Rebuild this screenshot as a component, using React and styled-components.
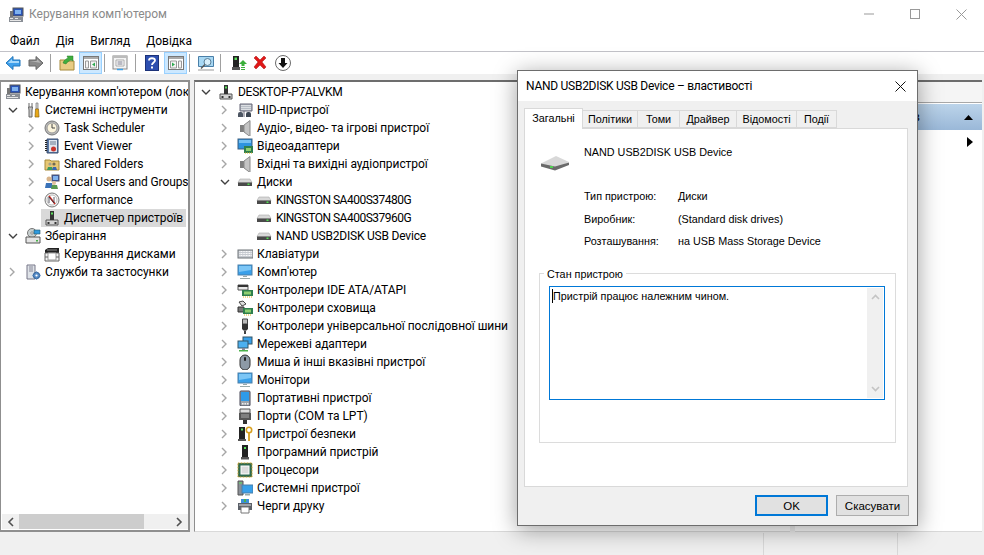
import React from 'react'
import styled, { createGlobalStyle } from 'styled-components'

const GlobalStyle = createGlobalStyle`
  html, body { margin: 0; padding: 0; background: #f0f0f0; }
  #root { width: 984px; height: 555px; overflow: hidden; }
  * { box-sizing: border-box; }
`

const uiFont = 'Roboto, "Noto Sans", sans-serif'
const dlgFont = '"Liberation Sans", Arial, sans-serif'

const Win = styled.div`
  position: relative;
  width: 984px;
  height: 555px;
  display: flex;
  flex-direction: column;
  background: #f0f0f0;
  font-family: ${uiFont};
  font-size: 12px;
  color: #000;
  overflow: hidden;
`
const TitleBar = styled.div`
  height: 30px;
  flex: none;
  background: #fff;
  display: flex;
  align-items: center;
  padding-left: 8px;
`
const TitleText = styled.span`
  margin: 0 0 2px 5px;
  color: #8a8a8a;
  font-size: 12px;
`
const WinControls = styled.div`
  margin-left: auto;
  display: flex;
  height: 100%;
`
const WinControl = styled.div`
  width: 46px;
  height: 28px;
  display: flex;
  align-items: center;
  justify-content: center;
`
const MenuBar = styled.div`
  height: 22px;
  flex: none;
  background: #fff;
  border-bottom: 1px solid #c2c2c8;
  display: flex;
  align-items: center;
  padding-left: 10px;
`
const MenuItem = styled.span`
  margin-right: ${p => p.$gap}px;
`
const Toolbar = styled.div`
  height: 22px;
  flex: none;
  background: #fff;
  display: flex;
  align-items: center;
  padding-left: 4px;
`
const ToolBtn = styled.div`
  width: ${p => p.$w || 22}px;
  height: 22px;
  margin-left: ${p => p.$ml || 0}px;
  display: flex;
  align-items: center;
  justify-content: center;
  background: ${p => (p.$active ? '#cce8ff' : 'transparent')};
  border: 1px solid ${p => (p.$active ? '#99d1ff' : 'transparent')};
`
const ToolSep = styled.div`
  width: 1px;
  height: 18px;
  margin: 0 ${p => p.$r || 4}px 0 ${p => p.$l || 2}px;
  background: #a0a0a0;
`
const Workspace = styled.div`
  flex: 1;
  min-height: 0;
  display: flex;
  padding: 6px 2px 1px 0;
`
const TreePane = styled.div`
  width: 190px;
  flex: none;
  display: flex;
  flex-direction: column;
  background: #fff;
  border: 1px solid #8f8f8f;
  border-top-width: 2px;
  border-right-width: 2px;
  border-bottom-width: 2px;
  overflow: hidden;
`
const Rows = styled.div`
  flex: 1;
  min-height: 0;
  padding-top: 1px;
  overflow: hidden;
`
const HScroll = styled.div`
  height: 15px;
  flex: none;
  margin: 0 0 1px 1px;
  background: #f0f0f0;
  display: flex;
  align-items: center;
`
const HArrow = styled.div`
  width: 17px;
  height: 15px;
  display: flex;
  align-items: center;
  justify-content: center;
`
const HThumb = styled.div`
  width: 125px;
  height: 15px;
  background: #cdcdcd;
  margin-right: auto;
`
const CenterPane = styled.div`
  width: 596px;
  margin-left: 4px;
  flex: none;
  background: #fff;
  border-left: 1px solid #8f8f8f;
  border-top: 2px solid #6d6d6d;
  border-bottom: 1px solid #d9d9d9;
  overflow: hidden;
`
const ActionsPane = styled.div`
  flex: 1;
  margin-left: 5px;
  background: #fff;
  border-top: 2px solid #6d6d6d;
  border-bottom: 1px solid #d9d9d9;
`
const ActionsTabs = styled.div`
  height: 21px;
  background: #f5f5f5;
  border-bottom: 1px solid #a8a8a8;
`
const ActionsHead = styled.div`
  height: 26px;
  margin-top: 1px;
  padding: 0 9px 0 5px;
  display: flex;
  align-items: center;
  justify-content: space-between;
  background: linear-gradient(#bcd4ea, #9ab8d8);
`
const ActionsRow = styled.div`
  height: 24px;
  padding-right: 9px;
  display: flex;
  align-items: center;
  justify-content: flex-end;
`
const StatusBar = styled.div`
  height: 22px;
  flex: none;
  display: flex;
`
const StatusCell = styled.div`
  width: ${p => p.$w}px;
  border-right: 1px solid #d9d9d9;
`

const Row = styled.div`
  height: 18px;
  display: flex;
  align-items: center;
  white-space: nowrap;
  padding-left: ${p => p.$pad}px;
`
const Twisty = styled.span`
  width: 16px;
  height: 18px;
  flex: none;
  padding-right: 3px;
  display: flex;
  align-items: center;
  justify-content: center;
`
const RowBody = styled.div`
  height: 18px;
  display: flex;
  align-items: center;
  padding: 0 3px;
  background: ${p => (p.$selected ? '#d9d9d9' : 'transparent')};
`
const Label = styled.span`
  margin-left: 4px;
  line-height: 18px;
  letter-spacing: ${p => p.$track || -0.05}px;
`
const IconBox = styled.svg`
  flex: none;
  display: block;
`

const Dialog = styled.div`
  position: absolute;
  left: 517px;
  top: 70px;
  width: 401px;
  height: 456px;
  display: flex;
  flex-direction: column;
  background: #f0f0f0;
  border: 1px solid #6d6d6d;
  box-shadow: 0 4px 22px rgba(0, 0, 0, 0.38);
`
const DialogTitle = styled.div`
  height: 30px;
  flex: none;
  background: #fff;
  padding-left: 8px;
  display: flex;
  align-items: center;
  justify-content: space-between;
  letter-spacing: -0.27px;
`
const DialogClose = styled.div`
  width: 34px;
  display: flex;
  justify-content: center;
`
const DialogBody = styled.div`
  flex: 1;
  padding: 7px 9px 0 6px;
  display: flex;
  flex-direction: column;
  font-family: ${dlgFont};
  font-size: 10.8px;
`
const Tabs = styled.div`
  height: 21px;
  flex: none;
  display: flex;
  align-items: flex-start;
  position: relative;
  z-index: 1;
`
const Tab = styled.div`
  width: ${p => p.$w}px;
  height: ${p => (p.$active ? 21 : 18)}px;
  margin-top: ${p => (p.$active ? 0 : 2)}px;
  background: ${p => (p.$active ? '#fff' : '#f0f0f0')};
  border: 1px solid #d9d9d9;
  border-left-width: ${p => (p.$first || p.$active ? 1 : 0)}px;
  border-bottom-width: ${p => (p.$active ? 0 : 1)}px;
  display: flex;
  align-items: center;
  justify-content: center;
  padding-bottom: ${p => (p.$active ? 3 : 0)}px;
`
const TabPanel = styled.div`
  height: 359px;
  flex: none;
  margin-top: -1px;
  background: #fff;
  border: 1px solid #d9d9d9;
  padding: 15px 11px 0 14px;
`
const DeviceHead = styled.div`
  display: flex;
  padding-left: 2px;
  height: 16px;
  line-height: 16px;
`
const DeviceIcon = styled.div`
  width: 43px;
  flex: none;
  padding-top: 11px;
`
const Facts = styled.div`
  margin: 25px 0 14px 45px;
  display: grid;
  grid-template-columns: 94px 1fr;
  grid-auto-rows: 22.5px;
  align-items: center;
`
const Group = styled.fieldset`
  margin: 0;
  min-width: 0;
  border: 1px solid #dcdcdc;
  padding: 5px 10px 42px 9px;
`
const Legend = styled.legend`
  padding: 0 3px;
  margin-left: -5px;
  line-height: 14px;
`
const StatusBox = styled.div`
  height: 114px;
  display: flex;
  border: 1px solid #0078d7;
  background: #fff;
`
const StatusText = styled.div`
  flex: 1;
  padding: 2px 0 0 2px;
  line-height: 15px;
`
const Caret = styled.span`
  display: inline-block;
  width: 1px;
  height: 14px;
  background: #000;
  vertical-align: -3px;
`
const VScroll = styled.div`
  width: 16px;
  margin: 1px;
  background: #f0f0f0;
  display: flex;
  flex-direction: column;
  justify-content: space-between;
  align-items: center;
  padding: 6px 0;
`
const Footer = styled.div`
  flex: 1;
  display: flex;
  justify-content: flex-end;
  gap: 8px;
  padding: 8px 0 0;
  margin-right: -1px;
`
const Btn = styled.div`
  width: 73px;
  height: 21px;
  display: flex;
  align-items: center;
  justify-content: center;
  background: #e1e1e1;
  font-size: 11.5px;
  border: ${p => (p.$default ? '2px solid #0078d7' : '1px solid #adadad')};
`

const Chevron = ({ open }) =>
  open ? (
    <svg width="10" height="7" viewBox="0 0 10 7"><path d="M1 1l4 4 4-4" fill="none" stroke="#404040" strokeWidth="1.4" /></svg>
  ) : (
    <svg width="7" height="10" viewBox="0 0 7 10"><path d="M1 1l4 4-4 4" fill="none" stroke="#a6a6a6" strokeWidth="1.4" /></svg>
  )

// 16x16 drawings for the tree and the toolbar
const icons = {
  mgmt: <><rect x="5" y="1" width="10" height="8" fill="#2a55b8" stroke="#555" /><path d="M7 3h6v4H7z" fill="#7fb2ee" /><path d="M1 10h14v5H1z" fill="#8a8f96" /><path d="M2 11h3v1H2zm5 0h3v1H7zM2 13h11v1H2z" fill="#e6e6e6" /><rect x="2" y="4" width="3" height="6" fill="#777" /></>,
  tools: <><path d="M4 1v4M7 1v4M3.5 5h4L7 8v7H4V8z" fill="#c8c8c8" stroke="#666" /><path d="M11 1h2v6h-2z" fill="#d8d8d8" stroke="#777" strokeWidth=".7" /><path d="M10.5 7h3l.5 8h-4z" fill="#e8a818" stroke="#8a6410" strokeWidth=".7" /></>,
  clock: <><circle cx="8" cy="8" r="7" fill="#bbb" stroke="#777" /><circle cx="8" cy="8" r="5" fill="#fbf4dc" stroke="#999" /><path d="M8 4v4h3" fill="none" stroke="#444" /></>,
  events: <><path d="M3 1h11v14H3z" fill="#5b7ba8" stroke="#3a4f70" /><path d="M5 2h8v12H5z" fill="#dfe6f0" /><path d="M6 4h6M6 6h6" stroke="#6a7a90" /><path d="M2 2v12" stroke="#222" strokeWidth="2" strokeDasharray="1 1" /><circle cx="9.5" cy="11" r="2.5" fill="#c8342c" /></>,
  shared: <><path d="M1 4h5l1 1h8v9H1z" fill="#e8c874" stroke="#a68a3a" /><circle cx="6" cy="8" r="1.6" fill="#a6a08a" /><circle cx="10" cy="8" r="1.6" fill="#706a55" /><path d="M3 14l1-3h4l1 3z" fill="#3a9a60" /><path d="M8 14l1-3h3l1 3z" fill="#3a66b0" /></>,
  users: <><rect x="8" y="1" width="7" height="6" fill="#2a55b8" stroke="#556" /><path d="M9 2h5v4H9z" fill="#7fb2ee" /><circle cx="5" cy="5" r="2.5" fill="#d8b48a" /><path d="M1 14l1-5h6l1 5z" fill="#3a72b8" /><circle cx="10" cy="9" r="2" fill="#e2c29c" /><path d="M7 15l1-4h5l1 4z" fill="#5a9a50" /></>,
  perf: <><circle cx="8" cy="8" r="7" fill="#f2f2f2" stroke="#777" /><circle cx="8" cy="8" r="5" fill="#fff" stroke="#bbb" /><path d="M5 4l6 8" stroke="#d02a20" strokeWidth="1.6" /><path d="M5 11V5l5 6V5" fill="none" stroke="#303040" strokeWidth=".8" /></>,
  tower: <><path d="M2 10h12v5H2z" fill="#d4d4d4" stroke="#555" /><path d="M6 1h4v9H6z" fill="#333" /><rect x="7" y="2.5" width="2" height="2" fill="#5be05b" /><path d="M3.5 12h2v2h-2zm7 0h2v2h-2z" fill="#333" /></>,
  storage: <><circle cx="7" cy="5" r="4.5" fill="#c8d0d0" stroke="#777" /><circle cx="7" cy="5" r="1.2" fill="#fff" stroke="#888" /><path d="M9 2h6v4H9z" fill="#2f9ae0" stroke="#256" strokeWidth=".6" /><path d="M1 9h14v6H1z" fill="#e4e4e4" stroke="#555" /><rect x="11" y="12" width="2" height="1.5" fill="#4ab04a" /></>,
  diskmgmt: <><path d="M1 4l3-2h11v5H1z" fill="#222" /><path d="M3 4h10" stroke="#888" /><path d="M1 7h14v8H1z" fill="#f2f2f2" stroke="#666" /><path d="M4 7h8v7H4z" fill="#fff" stroke="#999" /><path d="M1 11h3m8 0h3" stroke="#666" /></>,
  services: <><path d="M2 1h8v14H2z" fill="#dfe3e8" stroke="#778" /><path d="M4 3h4M4 5h4M4 7h4" stroke="#889" /><circle cx="11.5" cy="11.5" r="3.2" fill="#5a8ec8" stroke="#2f5f96" /><circle cx="11.5" cy="11.5" r="1.1" fill="#fff" /><path d="M11.5 7.5v1.5m0 5v1.5M7.5 11.5H9m5 0h1.5" stroke="#4a7eb8" strokeWidth="1.3" /></>,
  hid: <><path d="M3 2h12v7H3z" fill="#b8bec6" stroke="#667" /><path d="M4.500 3.500h9M4.500 5.500h9M4.500 7.500h9" stroke="#fff" strokeDasharray="1 1" /><path d="M1 15v-3a2 2 0 0 1 2-2h1a2 2 0 0 1 2 2v3z" fill="#4d5663" /><path d="M9 15v-3a2 2 0 0 1 2-2h1a2 2 0 0 1 2 2v3z" fill="#3d4653" /><path d="M7 9v6" stroke="#667" /></>,
  speaker: <><path d="M3 5h4v7H3z" fill="#7f7f7f" /><path d="M7 5l6-4.500v16L7 12z" fill="#c4c4c4" stroke="#8a8a8a" /></>,
  video: <><rect x="1" y="1" width="14" height="10" fill="#2d93e0" stroke="#3a5f80" /><path d="M2 2h12v3H2z" fill="#75c0f2" /><rect x="7" y="8" width="9" height="7" fill="#2f7f4e" /><path d="M9 10h5v3H9z" fill="#8fcf6f" /><path d="M8 15h7" stroke="#e2b020" strokeDasharray="1 1" /></>,
  disk: <><path d="M1 8.500L3 5h10l2 3.500z" fill="#d8d8d8" stroke="#aaa" strokeWidth=".6" /><path d="M1 8.500h14V12H1z" fill="#4a4a4a" /><rect x="10.500" y="9.500" width="2" height="1.500" fill="#52e052" /></>,
  keyboard: <><rect x="1" y="4" width="15" height="8" fill="#c6cad0" stroke="#6f7478" /><path d="M2.500 5.500h12M2.500 7.500h12M2.500 9.500h12" stroke="#fff" strokeDasharray="1 .6" /></>,
  monitor: <><rect x="1" y="1" width="14" height="10" fill="#39a0ea" stroke="#4a7fa8" /><path d="M2 2h12v4L2 8z" fill="#7cc6f6" /><path d="M6 12h4v1H6zM3 14h10v1H3z" fill="#9aa" /></>,
  ide: <><path d="M1 3h10v5H1z" fill="#e8e8e8" stroke="#555" /><path d="M1 3h10v2H1z" fill="#333" /><rect x="5" y="8" width="11" height="6" fill="#2f7f4e" /><path d="M7 9.500h7v3H7z" fill="#8fcf6f" /><path d="M6 15h9" stroke="#e2b020" strokeDasharray="1 1" /></>,
  storctl: <><path d="M2 2l4-1 3 3-4 2z" fill="#ddd" stroke="#444" /><path d="M1 7h6v5H1z" fill="#777" stroke="#333" /><rect x="6" y="8" width="10" height="6" fill="#2f7f4e" /><path d="M8 9.500h6v3H8z" fill="#8fcf6f" /><path d="M7 15h8" stroke="#e2b020" strokeDasharray="1 1" /></>,
  usb: <><path d="M5.500 1h5v5h-5z" fill="#bbb" stroke="#444" /><path d="M5 6h6v5l-1.500 1.500h-3L5 11z" fill="#333" /><path d="M7 12.500h2V16H7z" fill="#444" /></>,
  network: <><rect x="6" y="1" width="9" height="7" fill="#39a0ea" stroke="#356" /><rect x="1" y="5" width="10" height="7" fill="#4cb0f0" stroke="#356" /><path d="M2 14h9v1.500H2z" fill="#4ab04a" /><path d="M5 12h3v2H5z" fill="#889" /></>,
  mouse: <><rect x="3" y="1" width="10" height="15" rx="5" fill="#8d9aa6" stroke="#333" /><rect x="7" y="3" width="2" height="4" rx="1" fill="#222" /></>,
  portable: <><rect x="3" y="1" width="10" height="15" rx="1" fill="#9ea4aa" stroke="#445" /><rect x="4" y="2" width="8" height="9" fill="#2d9ae8" /><path d="M5 13h1.500v1.500H5zm2.500 0H9v1.500H7.500zm2.500 0h1.500v1.500H10z" fill="#eee" /></>,
  port: <><path d="M3 1h10v4H3z" fill="#ddd" stroke="#555" /><path d="M2 5h12v7H2z" fill="#555" /><path d="M4 7h8M4 9h8" stroke="#aaa" /><path d="M6 12h4v4H6z" fill="#333" /></>,
  secure: <><path d="M2 1h6v12H2z" fill="#222" /><rect x="4" y="2.500" width="2" height="2" fill="#5be05b" /><path d="M1 13h8v2H1z" fill="#555" /><circle cx="12" cy="4" r="2.700" fill="none" stroke="#d8a020" strokeWidth="1.600" /><path d="M12 7v8" stroke="#d8a020" strokeWidth="1.800" /></>,
  software: <><path d="M5 1h6v12H5z" fill="#222" /><rect x="7" y="3" width="2" height="2" fill="#5be05b" /><path d="M4 13h8v2.500H4z" fill="#555" /></>,
  cpu: <><rect x="1" y="1" width="14" height="14" fill="#2e6a50" stroke="#c8a030" strokeDasharray="1 .5" /><rect x="4" y="4" width="8" height="8" fill="#dcdcdc" stroke="#fff" /></>,
  system: <><path d="M1 1h5v14H1z" fill="#8a8f96" stroke="#555" /><path d="M2 3h3" stroke="#5be05b" /><rect x="5" y="5" width="11" height="8" fill="#39a0ea" stroke="#4a7fa8" /><path d="M8 14h5v1.500H8z" fill="#9aa" /></>,
  printer: <><path d="M4 1h8v4H4z" fill="#3a90d8" /><path d="M7 1h2v3H7z" fill="#4ab04a" /><path d="M1 5h14v7H1z" fill="#5b6068" /><path d="M2 6h12v2H2z" fill="#9ea2a8" /><path d="M4 9h8v6H4z" fill="#fff" stroke="#777" /></>,
  back: <><path d="M1 8l7-6.500V5h7v6H8v3.500z" fill="#3fa0ec" stroke="#2277bb" /><path d="M3 8l4-4v2h7v2z" fill="#a6d8fa" /></>,
  forward: <><path d="M15 8L8 1.500V5H1v6h7v3.500z" fill="#8a8a8a" stroke="#666" /><path d="M2 6h7V4l4 4z" fill="#b4b4b4" /></>,
  upFolder: <><path d="M1 5h5l1 1h8v9H1z" fill="#e8cc84" stroke="#a68a3a" /><path d="M4 8c1-3 3-4 5-5L8 1h6v5l-2-1c-2 1-4 2-5 4z" fill="#3fae3f" stroke="#277a27" strokeWidth=".5" /></>,
  panelLeft: <><rect x=".5" y="1.500" width="15" height="13" fill="#fff" stroke="#777" /><path d="M1 2h14v2H1z" fill="#aaa" /><path d="M2.500 6h3v7h-3zm5 0h6v7h-6z" fill="#f4f4f4" stroke="#999" /><path d="M12 7.500v4l-3-2z" fill="#2faa50" /></>,
  panelRight: <><rect x=".5" y="1.500" width="15" height="13" fill="#fff" stroke="#777" /><path d="M1 2h14v2H1z" fill="#aaa" /><path d="M2.500 6h6v7h-6zm8 0h3v7h-3z" fill="#f4f4f4" stroke="#999" /><path d="M4 7.500v4l3-2z" fill="#2faa50" /></>,
  exportList: <><rect x="1" y="1" width="14" height="13" fill="#f4f4f4" stroke="#888" /><path d="M1 1h14v2H1z" fill="#bbb" /><path d="M4 5h8v6H4z" fill="#fff" stroke="#aaa" /><path d="M5.500 7h5M5.500 9h5" stroke="#778" /><path d="M5 14.500h6" stroke="#39a0ea" strokeWidth="1.500" /></>,
  help: <><rect x="1.500" y=".5" width="13" height="15" fill="#2d4fb0" stroke="#1c3278" /><path d="M5 5.500C5 2.500 11 2.500 11 5.500c0 2-3 2-3 4.500" fill="none" stroke="#fff" strokeWidth="1.800" /><rect x="7" y="11.500" width="2" height="2" fill="#fff" /></>,
  connect: <><path d="M.5 1.500h15v10H.5z" fill="#a8d8f4" stroke="#4a7fa8" /><circle cx="9.500" cy="7" r="3.500" fill="#d8eefa" stroke="#5a7f98" /><path d="M7 9.500l-4 4" stroke="#555" strokeWidth="1.500" /><path d="M0 15h16" stroke="#aaa" strokeWidth="1.200" /></>,
  update: <><path d="M2 1h6v11H2z" fill="#222" /><rect x="3.500" y="2.500" width="2.500" height="2.500" fill="#5be05b" /><path d="M1 12h8v3H1z" fill="#555" /><path d="M12 5l4 4h-2.500v2h-3V9H8z" fill="#3ab03a" /><path d="M10 12h4v1h-4zm0 2h4v1h-4z" fill="#3ab03a" /></>,
  remove: <path d="M2 3l2-2 4 4 4-4 2 2-4 4 4 5-2 2-4-4-4 4-2-2 4-5z" fill="#e01818" stroke="#a80c0c" strokeWidth=".5" />,
  disable: <><circle cx="8" cy="8" r="7.500" fill="#fff" stroke="#6a6a6a" /><path d="M6 3h4v5h2.500L8 13 3.500 8H6z" fill="#111" /></>,
}

const Icon = ({ name, size = 16 }) => (
  <IconBox width={size} height={size} viewBox="0 0 16 16">{icons[name]}</IconBox>
)

const leftTree = [
  { pad: 1, icon: 'mgmt', text: "Керування комп'ютером (локальний)" },
  { pad: 5, open: true, icon: 'tools', text: 'Системні інструменти' },
  { pad: 24, tw: 1, icon: 'clock', text: 'Task Scheduler' },
  { pad: 24, tw: 1, icon: 'events', text: 'Event Viewer' },
  { pad: 24, tw: 1, icon: 'shared', text: 'Shared Folders' },
  { pad: 24, tw: 1, icon: 'users', text: 'Local Users and Groups', track: -0.12 },
  { pad: 24, tw: 1, icon: 'perf', text: 'Performance' },
  { pad: 40, icon: 'tower', text: 'Диспетчер пристроїв', selected: true },
  { pad: 5, open: true, icon: 'storage', text: 'Зберігання' },
  { pad: 40, icon: 'diskmgmt', text: 'Керування дисками' },
  { pad: 5, tw: 1, icon: 'services', text: 'Служби та застосунки' },
]

const centerTree = [
  { pad: 4, open: true, icon: 'tower', text: 'DESKTOP-P7ALVKM', track: -0.28 },
  { pad: 23, tw: 1, icon: 'hid', text: 'HID-пристрої' },
  { pad: 23, tw: 1, icon: 'speaker', text: 'Аудіо-, відео- та ігрові пристрої' },
  { pad: 23, tw: 1, icon: 'video', text: 'Відеоадаптери' },
  { pad: 23, tw: 1, icon: 'speaker', text: 'Вхідні та вихідні аудіопристрої' },
  { pad: 23, open: true, icon: 'disk', text: 'Диски' },
  { pad: 58, icon: 'disk', text: 'KINGSTON SA400S37480G', track: -0.5 },
  { pad: 58, icon: 'disk', text: 'KINGSTON SA400S37960G', track: -0.5 },
  { pad: 58, icon: 'disk', text: 'NAND USB2DISK USB Device', track: -0.2 },
  { pad: 23, tw: 1, icon: 'keyboard', text: 'Клавіатури' },
  { pad: 23, tw: 1, icon: 'monitor', text: "Комп'ютер" },
  { pad: 23, tw: 1, icon: 'ide', text: 'Контролери IDE ATA/ATAPI' },
  { pad: 23, tw: 1, icon: 'storctl', text: 'Контролери сховища' },
  { pad: 23, tw: 1, icon: 'usb', text: 'Контролери універсальної послідовної шини' },
  { pad: 23, tw: 1, icon: 'network', text: 'Мережеві адаптери' },
  { pad: 23, tw: 1, icon: 'mouse', text: 'Миша й інші вказівні пристрої' },
  { pad: 23, tw: 1, icon: 'monitor', text: 'Монітори' },
  { pad: 23, tw: 1, icon: 'portable', text: 'Портативні пристрої' },
  { pad: 23, tw: 1, icon: 'port', text: 'Порти (COM та LPT)' },
  { pad: 23, tw: 1, icon: 'secure', text: 'Пристрої безпеки' },
  { pad: 23, tw: 1, icon: 'software', text: 'Програмний пристрій' },
  { pad: 23, tw: 1, icon: 'cpu', text: 'Процесори' },
  { pad: 23, tw: 1, icon: 'system', text: 'Системні пристрої' },
  { pad: 23, tw: 1, icon: 'printer', text: 'Черги друку' },
]

const tabs = [
  ['Загальні', 59],
  ['Політики', 55],
  ['Томи', 42],
  ['Драйвер', 57],
  ['Відомості', 60],
  ['Події', 40],
]

const TreeRows = ({ items }) =>
  items.map(r => (
    <Row key={r.text} $pad={r.pad}>
      {(r.open || r.tw) && (
        <Twisty><Chevron open={r.open} /></Twisty>
      )}
      <RowBody $selected={r.selected}>
        <Icon name={r.icon} />
        <Label $track={r.track}>{r.text}</Label>
      </RowBody>
    </Row>
  ))

export default function App() {
  return (
    <Win>
      <GlobalStyle />
      <TitleBar>
        <Icon name="mgmt" />
        <TitleText>Керування комп'ютером</TitleText>
        <WinControls>
          <WinControl>
            <svg width="10" height="10" viewBox="0 0 10 10"><path d="M0 5h10" stroke="#999" /></svg>
          </WinControl>
          <WinControl>
            <svg width="10" height="10" viewBox="0 0 10 10"><rect x=".5" y=".5" width="9" height="9" fill="none" stroke="#999" /></svg>
          </WinControl>
          <WinControl>
            <svg width="11" height="11" viewBox="0 0 11 11"><path d="M.5.5l10 10m0-10l-10 10" stroke="#999" /></svg>
          </WinControl>
        </WinControls>
      </TitleBar>
      <MenuBar>
        <MenuItem $gap={16}>Файл</MenuItem>
        <MenuItem $gap={16}>Дія</MenuItem>
        <MenuItem $gap={16}>Вигляд</MenuItem>
        <MenuItem $gap={0}>Довідка</MenuItem>
      </MenuBar>
      <Toolbar>
        <ToolBtn $w={18}><Icon name="back" /></ToolBtn>
        <ToolBtn $w={18} $ml={5}><Icon name="forward" /></ToolBtn>
        <ToolSep $l={5} $r={6} />
        <ToolBtn $w={20}><Icon name="upFolder" /></ToolBtn>
        <ToolBtn $w={23} $ml={2} $active><Icon name="panelLeft" /></ToolBtn>
        <ToolSep $l={2} $r={4} />
        <ToolBtn $w={22}><Icon name="exportList" /></ToolBtn>
        <ToolSep $l={4} $r={5} />
        <ToolBtn $w={22}><Icon name="help" /></ToolBtn>
        <ToolBtn $w={23} $ml={1} $active><Icon name="panelRight" /></ToolBtn>
        <ToolSep $l={2} $r={5} />
        <ToolBtn $w={22}><Icon name="connect" /></ToolBtn>
        <ToolSep $l={3} $r={8} />
        <ToolBtn $w={20}><Icon name="update" /></ToolBtn>
        <ToolBtn $w={22}><Icon name="remove" /></ToolBtn>
        <ToolBtn $w={22} $ml={1}><Icon name="disable" /></ToolBtn>
      </Toolbar>
      <Workspace>
        <TreePane>
          <Rows><TreeRows items={leftTree} /></Rows>
          <HScroll>
            <HArrow><svg width="7" height="10" viewBox="0 0 7 10"><path d="M6 1L2 5l4 4" fill="none" stroke="#505050" strokeWidth="1.600" /></svg></HArrow>
            <HThumb />
            <HArrow><svg width="7" height="10" viewBox="0 0 7 10"><path d="M1 1l4 4-4 4" fill="none" stroke="#505050" strokeWidth="1.600" /></svg></HArrow>
          </HScroll>
        </TreePane>
        <CenterPane>
          <Rows><TreeRows items={centerTree} /></Rows>
        </CenterPane>
        <ActionsPane>
          <ActionsTabs />
          <ActionsHead>
            <span>Диспетчер пристроїв</span>
            <svg width="9" height="5" viewBox="0 0 9 5"><path d="M4.500 0L9 5H0z" fill="#000" /></svg>
          </ActionsHead>
          <ActionsRow>
            <svg width="6" height="10" viewBox="0 0 6 10"><path d="M0 0l6 5-6 5z" fill="#000" /></svg>
          </ActionsRow>
        </ActionsPane>
      </Workspace>
      <StatusBar>
        <StatusCell $w={764} />
        <StatusCell $w={134} />
      </StatusBar>

      <Dialog>
        <DialogTitle>
          <span>NAND USB2DISK USB Device – властивості</span>
          <DialogClose>
            <svg width="11" height="11" viewBox="0 0 11 11"><path d="M.5.5l10 10m0-10l-10 10" stroke="#111" /></svg>
          </DialogClose>
        </DialogTitle>
        <DialogBody>
          <Tabs>
            {tabs.map(([t, w], i) => (
              <Tab key={t} $w={w} $active={i === 0} $first={i === 0}>{t}</Tab>
            ))}
          </Tabs>
          <TabPanel>
            <DeviceHead>
              <DeviceIcon>
                <svg width="28" height="16" viewBox="0 0 28 16">
                  <path d="M0 8.500L15 1l13 6-13 6.500z" fill="#d8d8d8" />
                  <path d="M0 8.500l14 3 14-4v2.500L14 15.500 0 11.500z" fill="#6a6a6a" />
                  <rect x="9" y="11" width="3" height="2" fill="#52d052" />
                </svg>
              </DeviceIcon>
              NAND USB2DISK USB Device
            </DeviceHead>
            <Facts>
              <span>Тип пристрою:</span><span>Диски</span>
              <span>Виробник:</span><span>(Standard disk drives)</span>
              <span>Розташування:</span><span>на USB Mass Storage Device</span>
            </Facts>
            <Group>
              <Legend>Стан пристрою</Legend>
              <StatusBox>
                <StatusText><Caret />Пристрій працює належним чином.</StatusText>
                <VScroll>
                  <svg width="9" height="6" viewBox="0 0 9 6"><path d="M1 5l3.500-3.500L8 5" fill="none" stroke="#c4c4c4" strokeWidth="1.600" /></svg>
                  <svg width="9" height="6" viewBox="0 0 9 6"><path d="M1 1l3.500 3.500L8 1" fill="none" stroke="#c4c4c4" strokeWidth="1.600" /></svg>
                </VScroll>
              </StatusBox>
            </Group>
          </TabPanel>
          <Footer>
            <Btn $default>OK</Btn>
            <Btn>Скасувати</Btn>
          </Footer>
        </DialogBody>
      </Dialog>
    </Win>
  )
}
